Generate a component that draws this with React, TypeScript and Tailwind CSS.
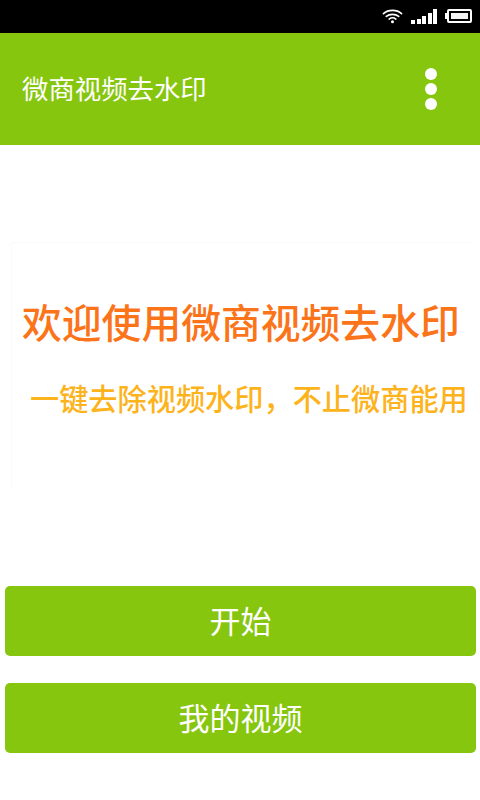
import React from 'react';

const font = { fontFamily: '"Noto Sans CJK SC", "Liberation Sans", sans-serif' };

const StatusBar: React.FC = () => (
  <div className="h-[33px] bg-black flex items-center justify-end pr-[8px] pb-[1px]">
    {/* wifi */}
    <svg width="21" height="16" viewBox="0 0 22 16" fill="none" stroke="white" strokeLinecap="round" className="mr-[8px]">
      <path d="M1.5 5.5C6.5 1 15.5 1 20.5 5.5" strokeWidth="1.7" />
      <path d="M4.5 8.5C8 5.5 14 5.5 17.5 8.5" strokeWidth="1.7" />
      <path d="M7.5 11.2C9.6 9.6 12.4 9.6 14.5 11.2" strokeWidth="1.7" />
      <circle cx="11" cy="14" r="1.6" fill="white" stroke="none" />
    </svg>
    {/* signal */}
    <div className="flex items-end gap-[1.5px] h-[15px] mr-[8px]">
      <div className="w-[4px] h-[4px] bg-white" />
      <div className="w-[4px] h-[5px] bg-white" />
      <div className="w-[4px] h-[8px] bg-white" />
      <div className="w-[4px] h-[11px] bg-white" />
      <div className="w-[4px] h-[15px] bg-white" />
    </div>
    {/* battery */}
    <div className="flex items-center">
      <div className="w-[2px] h-[6px] bg-white" />
      <div className="w-[25px] h-[14px] border-2 border-white rounded-[2px] p-[2px]">
        <div className="w-full h-full bg-[#f4f4f4]" />
      </div>
    </div>
  </div>
);

const AppButton: React.FC<{ label: string }> = ({ label }) => (
  <button className="w-full h-[70px] pb-[3px] bg-[#86c60e] rounded-[5px] text-white text-[31px] leading-none">
    {label}
  </button>
);

export default function App() {
  return (
    <div className="w-[480px] h-[800px] bg-white flex flex-col overflow-hidden" style={font}>
      <StatusBar />

      <div className="h-[112px] bg-[#86c60e] flex items-center justify-between pl-[22px] pr-[43px]">
        <span className="text-white text-[26.4px] leading-none pb-[2px]">微商视频去水印</span>
        <div className="flex flex-col gap-[3px]">
          <div className="w-[12px] h-[12px] rounded-full bg-white" />
          <div className="w-[12px] h-[12px] rounded-full bg-white" />
          <div className="w-[12px] h-[12px] rounded-full bg-white" />
        </div>
      </div>

      <div className="mt-[97px] mx-[11px] h-[248px] w-[461px] border-t border-l border-[#fafafa] flex flex-col">
        <div className="mt-[53px] pl-[10px] text-[#fb7419] text-[39.8px] font-medium leading-[50px] whitespace-nowrap">
          欢迎使用微商视频去水印
        </div>
        <div className="mt-[31px] pl-[18px] text-[#fcb31c] text-[29.2px] font-medium leading-[40px] whitespace-nowrap">
          一键去除视频水印，不止微商能用
        </div>
      </div>

      <div className="mt-[96px] px-[5px] pr-[4px] flex flex-col gap-[27px]">
        <AppButton label="开始" />
        <AppButton label="我的视频" />
      </div>
    </div>
  );
}
